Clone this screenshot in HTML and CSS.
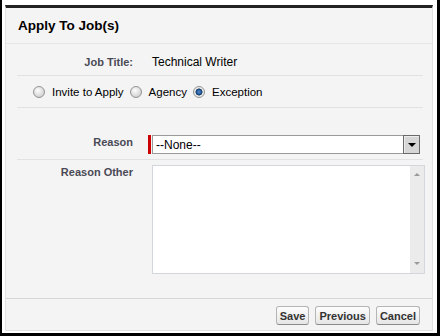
FILE: index.html
```html
<!DOCTYPE html>
<html>
<head>
    <meta charset="UTF-8">
    <title>Apply To Job(s)</title>
    <link rel="stylesheet" href="styles.css">
</head>
<body>
<div class="frame">
    <div class="panel">
        <div class="panel-head">
            <h2 class="title">Apply To Job(s)</h2>
        </div>
        <div class="panel-body">
            <div class="row row-info">
                <div class="label">Job Title:</div>
                <div class="value">Technical Writer</div>
            </div>
            <div class="row row-radios">
                <label class="radio"><input type="radio" name="mode"> Invite to Apply</label>
                <label class="radio"><input type="radio" name="mode"> Agency</label>
                <label class="radio"><input type="radio" name="mode" checked> Exception</label>
            </div>
            <div class="row row-reason">
                <div class="label">Reason</div>
                <div class="value required">
                    <div class="select-box">
                        <select class="select">
                            <option>--None--</option>
                        </select>
                        <span class="select-btn"><span class="arrow-down"></span></span>
                    </div>
                </div>
            </div>
            <div class="row row-other">
                <div class="label">Reason Other</div>
                <div class="value">
                    <div class="textbox">
                        <textarea class="textarea"></textarea>
                        <div class="scroll">
                            <span class="scroll-up"></span>
                            <span class="scroll-down"></span>
                        </div>
                    </div>
                </div>
            </div>
        </div>
        <div class="panel-foot">
            <button class="btn">Save</button>
            <button class="btn">Previous</button>
            <button class="btn">Cancel</button>
        </div>
    </div>
</div>
</body>
</html>
```

FILE: styles.css
```css
body {
    margin: 0;
    background: #fff;
    font-family: "Liberation Sans", Arial, sans-serif;
    color: #000;
}

.frame {
    width: 440px;
    height: 336px;
    box-sizing: border-box;
    border-left: 2px solid #000;
    border-right: 3px solid #000;
    border-bottom: 3px solid #000;
    padding: 5px 4px 2px 3px;
}

.panel {
    height: 100%;
    box-sizing: border-box;
    display: flex;
    flex-direction: column;
    background: #f4f4f4;
    border: 1px solid #e0e2e4;
    border-top: 3px solid #222;
}

.panel-head {
    padding: 10px 12px 9px;
    border-bottom: 1px solid #e6e6e6;
}

.title {
    margin: 0;
    font-size: 13.5px;
    line-height: 16px;
    font-weight: bold;
}

.panel-body {
    flex: 1;
}

.row {
    margin: 0 9px 0 11px;
    border-bottom: 1px solid #e2e2e2;
}

.row-info,
.row-reason,
.row-other {
    display: grid;
    grid-template-columns: 116px 1fr;
    column-gap: 19px;
    align-items: start;
}

.label {
    text-align: right;
    font-size: 11px;
    line-height: 14px;
    font-weight: bold;
    color: #4a4a56;
}

.value {
    font-size: 12px;
    line-height: 14px;
}

.row-info {
    padding: 11px 0 6px;
}

.row-radios {
    display: flex;
    align-items: center;
    height: 31px;
    padding-left: 16px;
    font-size: 11.5px;
}

.radio {
    display: inline-flex;
    align-items: center;
    gap: 7px;
    margin-right: 6px;
    color: #000;
}

.radio input {
    appearance: none;
    -webkit-appearance: none;
    width: 12px;
    height: 12px;
    margin: 0;
    border: 1px solid #939393;
    border-radius: 50%;
    background: radial-gradient(circle at 40% 35%, #fdfdfd, #d2d2d2 75%);
}

.radio input:checked {
    background: radial-gradient(circle at 50% 50%, #5a8fd0 0, #1d4f8e 2.5px, #16385f 3.2px, #e4e4e4 3.8px, #f6f6f6 6px);
}

.row-reason {
    padding: 27px 0 5px;
}

.required {
    margin-left: -4px;
    padding-left: 1px;
    border-left: 3px solid #c00;
}

.select-box {
    display: flex;
    height: 19px;
    box-sizing: border-box;
    width: 268px;
    border: 1px solid #9a9a9a;
    border-right: 0;
    background: #fff;
}

.select {
    flex: 1;
    appearance: none;
    -webkit-appearance: none;
    border: 0;
    margin: 0;
    padding: 0 0 0 3px;
    background: transparent;
    font-family: "Liberation Sans", Arial, sans-serif;
    font-size: 12px;
    color: #000;
    outline: none;
}

.select-btn {
    display: flex;
    align-items: center;
    justify-content: center;
    width: 17px;
    margin: -1px 0;
    box-sizing: border-box;
    border: 1px solid #6a6a6a;
    background: #d6d6d6;
    box-shadow: inset 1px 1px 0 #ececec;
}

.arrow-down {
    width: 0;
    height: 0;
    border-left: 4px solid transparent;
    border-right: 4px solid transparent;
    border-top: 4px solid #000;
    margin-top: 1px;
}

.row-other {
    padding-top: 5px;
    border-bottom: 0;
}

.textbox {
    display: flex;
    width: 273px;
    height: 109px;
    box-sizing: border-box;
    border: 1px solid #d3d6da;
    background: #fff;
}

.textarea {
    flex: 1;
    border: 0;
    margin: 0;
    padding: 2px;
    resize: none;
    outline: none;
    background: transparent;
    font-family: "Liberation Sans", Arial, sans-serif;
    font-size: 12px;
}

.scroll {
    width: 14px;
    background: #ebebeb;
    display: flex;
    flex-direction: column;
    justify-content: space-between;
    align-items: center;
    padding: 7px 0 8px;
}

.scroll-up {
    width: 0;
    height: 0;
    border-left: 3px solid transparent;
    border-right: 3px solid transparent;
    border-bottom: 3px solid #9a9a9a;
}

.scroll-down {
    width: 0;
    height: 0;
    border-left: 3px solid transparent;
    border-right: 3px solid transparent;
    border-top: 3px solid #9a9a9a;
}

.panel-foot {
    display: flex;
    justify-content: flex-end;
    gap: 6px;
    border-top: 1px solid #d6d6d6;
    padding: 7px 12px 5px;
}

.btn {
    height: 19px;
    margin: 0;
    padding: 0 3px;
    border: 1px solid #b5b5b5;
    border-bottom-color: #8a8a8a;
    border-radius: 3px;
    background: linear-gradient(to bottom, #fdfdfd, #e6e6e6);
    font-family: "Liberation Sans", Arial, sans-serif;
    font-size: 11px;
    font-weight: bold;
    color: #333;
}
```
